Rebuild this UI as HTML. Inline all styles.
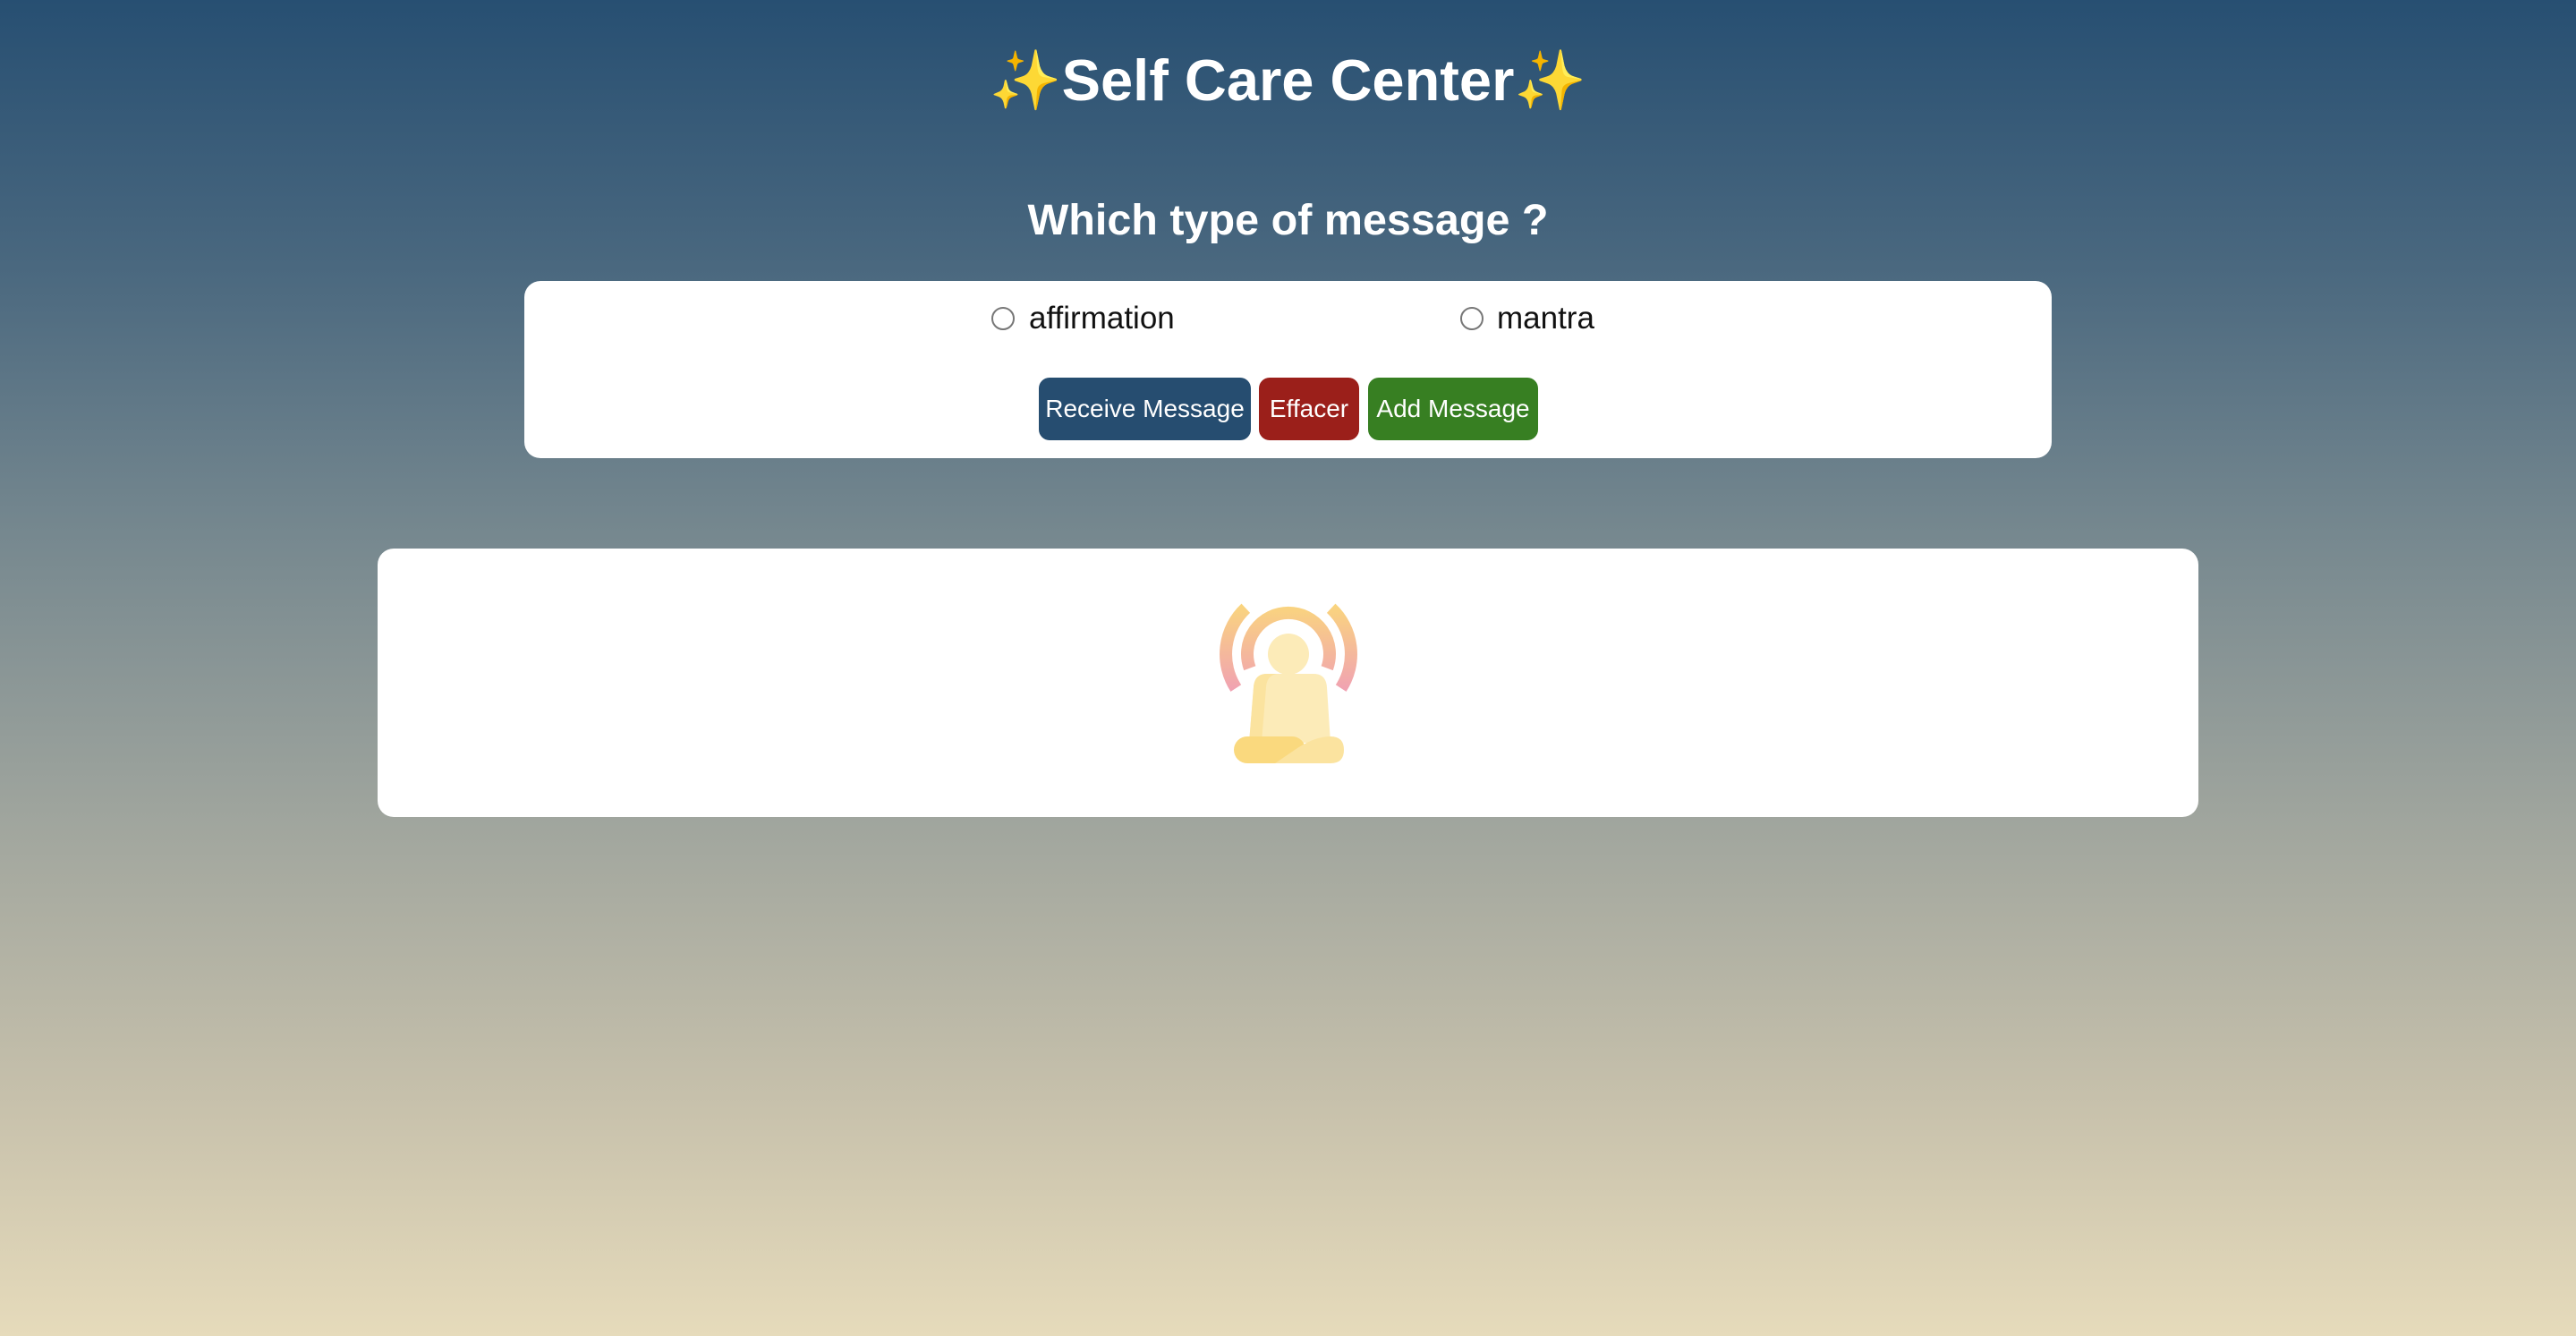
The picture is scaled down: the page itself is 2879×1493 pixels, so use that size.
<!DOCTYPE html>
<html><head><meta charset="utf-8"><style>
html,body{margin:0;padding:0;}
body{width:2879px;height:1493px;position:relative;overflow:hidden;font-family:"Liberation Sans",sans-serif;
background:linear-gradient(to bottom,#274f72 0%,#4a687f 20%,#76888f 40%,#a1a69e 62%,#c6c0ab 82%,#e6dbbb 100%);}
.t{position:absolute;left:0;width:2879px;text-align:center;color:#fff;font-weight:bold;}
.card{position:absolute;background:#fff;border-radius:18px;}
.btn{position:absolute;top:422px;height:70px;border-radius:12px;color:#fff;font-size:28px;line-height:70px;text-align:center;}
.radio{position:absolute;width:22px;height:22px;border:2px solid #777;border-radius:50%;top:343px;}
.lab{position:absolute;top:336px;font-size:35px;color:#111;}
</style></head><body>
<div class="t" style="top:52px;font-size:65px;"><span style="color:#f7c531">✨</span>Self Care Center<span style="color:#f7c531">✨</span></div>
<div class="t" style="top:218px;font-size:48.5px;">Which type of message ?</div>
<div class="card" style="left:586px;top:314px;width:1707px;height:198px;"></div>
<div class="radio" style="left:1108px;"></div>
<div class="lab" style="left:1150px;">affirmation</div>
<div class="radio" style="left:1632px;"></div>
<div class="lab" style="left:1673px;">mantra</div>
<div class="btn" style="left:1161px;width:237px;background:#264d70;">Receive Message</div>
<div class="btn" style="left:1407px;width:112px;background:#9b1f1a;">Effacer</div>
<div class="btn" style="left:1529px;width:190px;background:#377f22;">Add Message</div>
<div class="card" style="left:422px;top:613px;width:2035px;height:300px;"></div>
<svg style="position:absolute;left:1330px;top:640px;" width="220" height="240" viewBox="0 0 220 240">
<defs><linearGradient id="g" gradientUnits="userSpaceOnUse" x1="0" y1="32" x2="0" y2="135"><stop offset="0" stop-color="#fad77c"/><stop offset="1" stop-color="#f0a0b4"/></linearGradient></defs>
<g fill="none" stroke="url(#g)" stroke-width="14">
<path d="M66.8 106.7 A46 46 0 1 1 153.2 106.7"/>
<path d="M51.3 129.1 A70 70 0 0 1 62.3 39.8"/>
<path d="M157.7 39.8 A70 70 0 0 1 168.7 129.1"/>
</g>
<path d="M86 113 H138 Q152 113 153 128 L157 190 H66 L71 128 Q72 113 86 113 Z" fill="#fcebb8"/>
<path d="M86 113 H100 Q86 113 85 128 L80 190 H66 L71 128 Q72 113 86 113 Z" fill="#fbe39f"/>
<circle cx="110" cy="91" r="23" fill="#fcebb8"/>
<path d="M98 73 A23 23 0 0 0 129 105 A23 23 0 0 1 98 73 Z" fill="#fbe39f"/>
<rect x="49" y="183" width="80" height="30" rx="15" fill="#fad97e"/>
<path d="M95 213 L120 196 Q140 183 157 183 Q172 183 172 198 Q172 213 157 213 Z" fill="#fbe39f"/>
</svg>
</body></html>
